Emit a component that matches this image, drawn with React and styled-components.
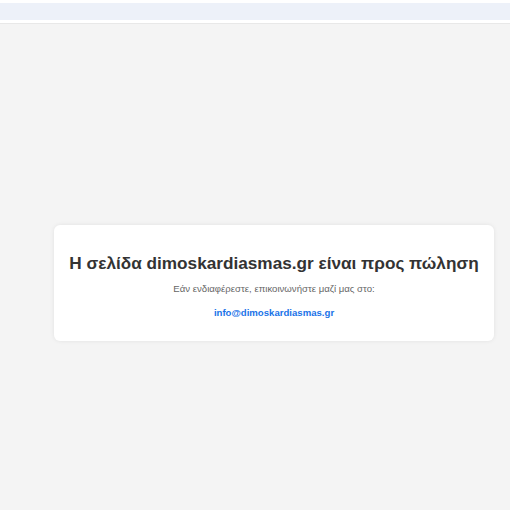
import React from 'react';
import styled, { createGlobalStyle } from 'styled-components';

const GlobalStyle = createGlobalStyle`
    html, body {
        margin: 0;
        padding: 0;
        background: #f4f4f4;
        font-family: "Liberation Sans", Arial, sans-serif;
    }
`

const App = () => {
    return (
        <Page>
            <GlobalStyle />
            <TopBar>
                <TopStrip />
            </TopBar>

            <Main>
                <Card>
                    <Title>Η σελίδα dimoskardiasmas.gr είναι προς πώληση</Title>
                    <Text>Εάν ενδιαφέρεστε, επικοινωνήστε μαζί μας στο:</Text>
                    <Mail href="mailto:info@dimoskardiasmas.gr">info@dimoskardiasmas.gr</Mail>
                </Card>
            </Main>
        </Page>
    )
}

export default App;


const Page = styled.div`
    min-height: 510px;
    background: #f4f4f4;
`

const TopBar = styled.div`
    background: #ffffff;
    padding: 3px 0;
    border-bottom: 1px solid #e8e8e8;
`

const TopStrip = styled.div`
    height: 17px;
    background: #edf1f9;
`

const Main = styled.div`
    display: flex;
    padding: 201px 16px 0 54px;
`

const Card = styled.div`
    width: 440px;
    box-sizing: border-box;
    background: #ffffff;
    border-radius: 6px;
    box-shadow: 0 0 4px rgba(0, 0, 0, 0.08);
    padding: 28px 6px 21px;
    text-align: center;
`

const Title = styled.h1`
    margin: 0 0 10px;
    font-size: 17.2px;
    line-height: 20px;
    font-weight: bold;
    color: #333333;
    white-space: nowrap;
`

const Text = styled.p`
    margin: 0 0 8px;
    font-size: 9.6px;
    line-height: 11px;
    color: #666666;
`

const Mail = styled.a`
    display: inline-block;
    font-size: 9.6px;
    line-height: 11px;
    font-weight: bold;
    color: #1a73e8;
    text-decoration: none;
`
